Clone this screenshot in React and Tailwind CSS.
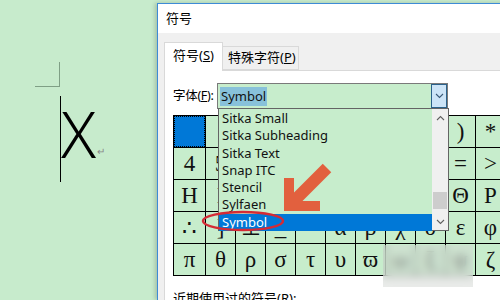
import React from "react"

const rows = [
    [" ", "!", "∀", "#", "∃", "%", "&", "∋", "(", ")", "*"],
    ["4", "5", "6", "7", "8", "9", ":", ";", "<", "=", ">"],
    ["Η", "Ι", "ϑ", "Κ", "Λ", "Μ", "Ν", "Ο", "Π", "Θ", "Ρ"],
    ["∴", "]", "⊥", "_", "‾", "α", "β", "χ", "δ", "ε", "φ"],
    ["π", "θ", "ρ", "σ", "τ", "υ", "ϖ", "ω", "ξ", "ψ", "ζ"],
]

const fonts = ["Sitka Small", "Sitka Subheading", "Sitka Text", "Snap ITC", "Stencil", "Sylfaen", "Symbol"]

const cjk = "font-['Noto_Sans','Noto_Sans_CJK_SC',sans-serif]"

function Chevron({ up, className }) {
    return (
        <svg width="9" height="6" viewBox="0 0 9 6" className={className}>
            <path d={up ? "M1 5 L4.5 1.5 L8 5" : "M1 1 L4.5 4.5 L8 1"} fill="none" stroke="currentColor" strokeWidth="1.1" />
        </svg>
    )
}

function FontList() {
    return (
        <div className="absolute top-full left-0 w-[231px] h-[123px] bg-[#c7edcc] border border-[#646464] flex z-20">
            <ul className="flex-1 pt-px font-['Noto_Sans',sans-serif] text-[13px] text-[#111]">
                {fonts.map((name) => (
                    <li
                        key={name}
                        className={`h-[17.3px] leading-[17px] pl-[3px] ${name === "Symbol" ? "bg-[#0078d7] text-white" : ""}`}
                    >
                        {name}
                    </li>
                ))}
            </ul>
            {/* scrollbar */}
            <div className="w-[16px] bg-[#f0f0f0] flex flex-col items-center text-[#606060]">
                <div className="h-[17px] flex items-center justify-center"><Chevron up /></div>
                <div className="flex-1 w-full flex flex-col justify-end pb-[4px] px-px">
                    <div className="h-[17px] bg-[#cdcdcd]" />
                </div>
                <div className="h-[17px] flex items-center justify-center"><Chevron /></div>
            </div>
        </div>
    )
}

function SymbolGrid() {
    return (
        <div className="grid grid-cols-[32px_repeat(10,30px)] w-max border-l border-t border-black font-['Liberation_Serif',serif] text-[23px] text-[#111]">
            {rows.map((row, r) =>
                row.map((ch, c) => (
                    <div
                        key={`${r}-${c}`}
                        className="h-[32px] border-r border-b border-black bg-[#c7edcc] flex items-center justify-center leading-none"
                    >
                        {r === 0 && c === 0 ? (
                            <div className="w-full h-full bg-[#0078d7] border border-dotted border-black" />
                        ) : (
                            ch
                        )}
                    </div>
                ))
            )}
        </div>
    )
}

export default function App() {
    return (
        <div className="w-[500px] h-[300px] overflow-hidden bg-[#c7ebcc] flex relative">
            {/* document page */}
            <div className="w-[157px] shrink-0 flex flex-col">
                <div className="ml-[35px] mt-[62px] w-[25px] h-[25px] border-r border-b border-[#7f9f85]" />
                <div className="ml-[60px] mt-[9px] flex items-start">
                    <div className="w-px h-[86px] bg-black" />
                    <div className="mt-[6px] font-['Noto_Sans',sans-serif] font-light text-[64px] leading-none text-black">X</div>
                    <div className="mt-[50px] ml-px text-[10px] leading-none text-[#888]">↵</div>
                </div>
            </div>

            {/* dialog */}
            <div className={`mt-[3px] flex-1 flex flex-col border-l border-t border-[#3d8bd6] bg-[#f0f0f0] shadow-[-2px_0_4px_rgba(0,0,0,0.18)] ${cjk} text-[13px] text-black`}>
                <div className="h-[29px] shrink-0 bg-white pl-[8px] flex items-center">符号</div>

                <div className="h-[37px] shrink-0 pl-[6px] flex items-end">
                    <div className="relative z-10 -mb-px w-[59px] h-[29px] bg-white border border-b-0 border-[#d9d9d9] pl-[8px] pt-[3px] whitespace-nowrap">
                        符号(<span className="underline">S</span>)
                    </div>
                    <div className="w-[76px] h-[24px] border border-l-0 border-[#d9d9d9] pl-[5px] pt-px whitespace-nowrap">
                        特殊字符(<span className="underline">P</span>)
                    </div>
                </div>

                <div className="relative ml-[6px] flex-1 bg-white border-l border-t border-[#d9d9d9] pl-[8px] pt-[12px]">
                    <div className="flex items-center h-[26px]">
                        <div className="w-[44px] shrink-0 whitespace-nowrap text-[12.5px] tracking-[-0.3px]">字体(<span className="underline">F</span>):</div>
                        <div className="relative w-[231px] h-[26px] border border-[#7a7a7a] bg-[#c7edcc] flex items-center">
                            <span className="ml-[2px] h-[19px] px-px bg-[#88c1da] font-['Noto_Sans',sans-serif] text-[13px] leading-[19px] text-[#111]">Symbol</span>
                            <div className="ml-auto w-[16px] h-full bg-[#cce4f7] border border-[#2c628b] flex items-center justify-center text-[#3a5a78]">
                                <Chevron />
                            </div>
                            <FontList />
                        </div>
                    </div>

                    <div className="mt-[6px]">
                        <SymbolGrid />
                    </div>

                    <div className="mt-[13px] whitespace-nowrap">
                        近期使用过的符号(<span className="underline">R</span>):
                    </div>

                    {/* blurred watermark */}
                    <div className="absolute left-[218px] top-[174px] w-[90px] h-[42px] backdrop-blur-[4px] bg-[#d4d8d4]/50" />
                </div>
            </div>

            {/* annotations */}
            <svg className="absolute inset-0 pointer-events-none z-30" width="500" height="300" viewBox="0 0 500 300">
                <line x1="293" y1="202" x2="327" y2="168" stroke="#e2603e" strokeWidth="12" />
                <polyline points="289,178 289,206 320,206" fill="none" stroke="#e2603e" strokeWidth="10" strokeLinejoin="miter" />
                <ellipse cx="243" cy="221" rx="40" ry="9" fill="none" stroke="#d42b35" strokeWidth="2.5" />
            </svg>
        </div>
    )
}
